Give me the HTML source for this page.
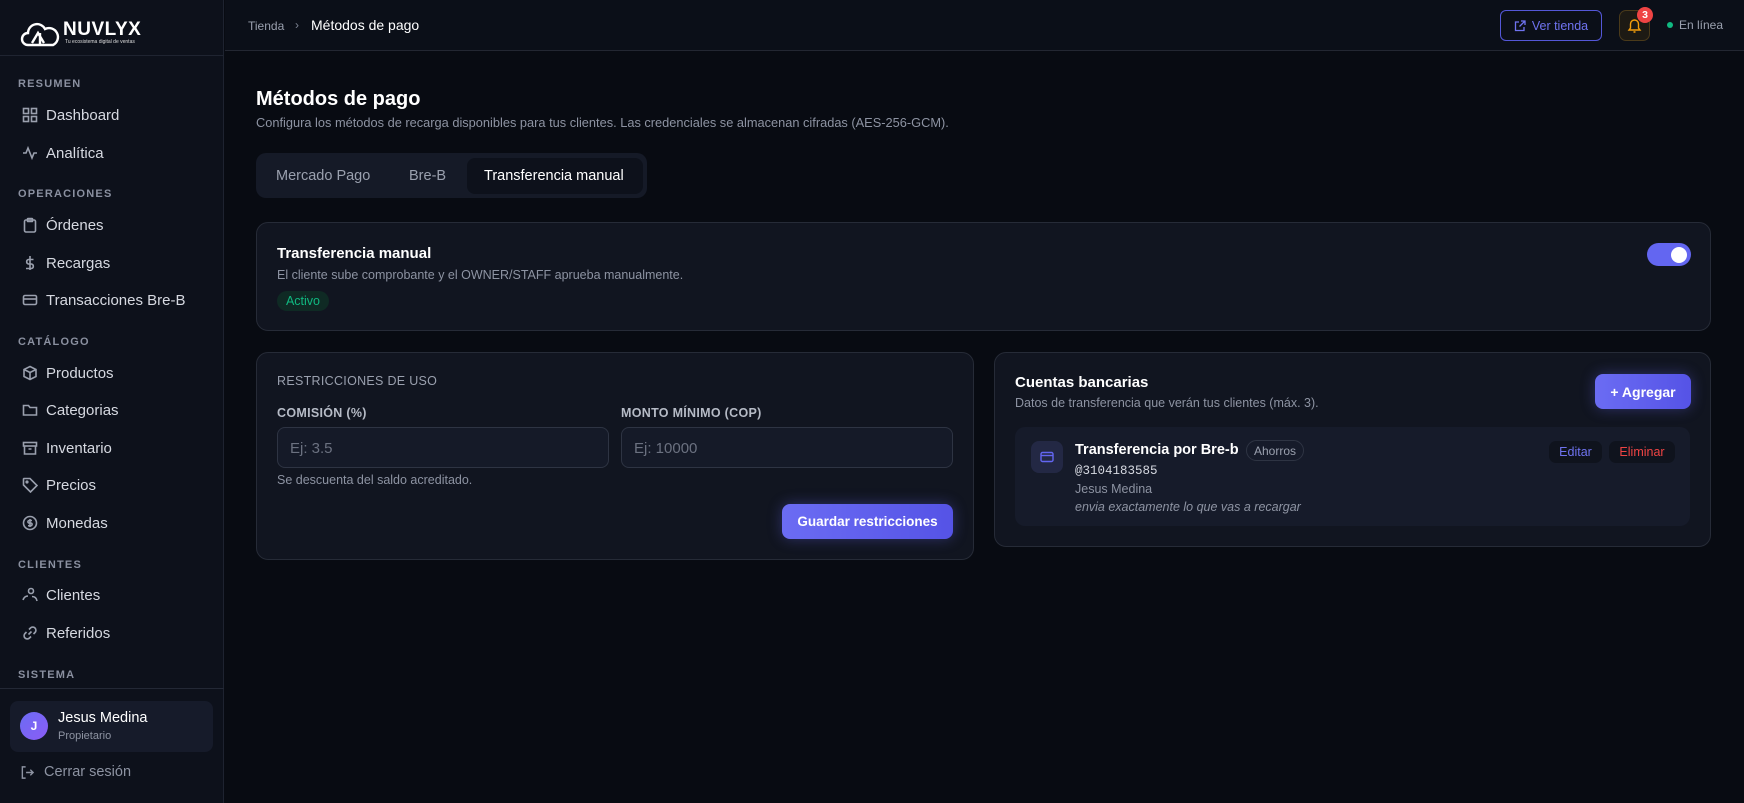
<!DOCTYPE html>
<html><head><meta charset="utf-8"><style>
*{box-sizing:border-box;margin:0;padding:0}
body{width:1744px;height:803px;overflow:hidden;background:#080b12;font-family:"Liberation Sans",sans-serif;color:#e6e8ee;position:relative}
.abs{position:absolute}
.sb{left:0;top:0;width:224px;height:803px;background:#0d111b;border-right:1px solid #1e2330}
.sec{left:18px;font-size:11px;letter-spacing:1.2px;color:#8a90a0;font-weight:bold}
.it{left:22px;font-size:15px;color:#d6d9e1;display:flex;align-items:center;gap:8px;height:20px}
.it svg{width:16px;height:16px;stroke:#9aa0ae;fill:none;stroke-width:1.6}
.card{background:#111520;border:1px solid #262b37;border-radius:12px}
.muted{color:#8d93a2}
.inp{background:#151a28;border:1px solid #2e3443;border-radius:8px;height:41px;font-size:15px;color:#6b7180;padding:12px 12px}
.lbl{font-size:12.5px;font-weight:bold;color:#b6bbc6;letter-spacing:.3px}
.btn{background:linear-gradient(90deg,#6b6cf3,#5553e6);border-radius:8px;color:#fff;font-weight:bold;font-size:13.5px;display:flex;align-items:center;justify-content:center;box-shadow:0 0 14px rgba(99,102,241,.35)}
</style></head><body>
<div class="abs sb"></div>
<div class="abs" style="left:0;top:55px;width:224px;border-top:1px solid #1f2431"></div>
<svg class="abs" style="left:20px;top:20px" width="40" height="28" viewBox="0 0 40 28" fill="none" stroke="#fff" stroke-width="2.4"><path d="M8 25a6 6 0 0 1 0-12a9 9 0 0 1 17-4a7 7 0 0 1 8 16z"/><path d="M12 23l6-10l6 10M20 13v12"/></svg>
<div class="abs" style="left:63px;top:19px;font-size:19px;font-weight:bold;color:#fff;letter-spacing:.5px">NUVLYX</div>
<div class="abs" style="left:65px;top:39px;font-size:5px;color:#ddd">Tu ecosistema digital de ventas</div>

<div class="abs sec" style="top:78px">RESUMEN</div>
<div class="abs it" style="top:105px"><svg viewBox="0 0 16 16"><rect x="1.5" y="1.5" width="5" height="5"/><rect x="9.5" y="1.5" width="5" height="5"/><rect x="1.5" y="9.5" width="5" height="5"/><rect x="9.5" y="9.5" width="5" height="5"/></svg>Dashboard</div>
<div class="abs it" style="top:143px"><svg viewBox="0 0 16 16"><path d="M1 8h3l2-5 4 10 2-5h3"/></svg>Analítica</div>
<div class="abs sec" style="top:188px">OPERACIONES</div>
<div class="abs it" style="top:215px"><svg viewBox="0 0 16 16"><rect x="2.5" y="3" width="11" height="12" rx="1.5"/><rect x="5.5" y="1.5" width="5" height="3" rx=".5"/></svg>Órdenes</div>
<div class="abs it" style="top:253px"><svg viewBox="0 0 16 16"><path d="M8 1v14M11.5 4.5H6.5a2.3 2.3 0 0 0 0 4.5h3a2.3 2.3 0 0 1 0 4.5H4"/></svg>Recargas</div>
<div class="abs it" style="top:290px"><svg viewBox="0 0 16 16"><rect x="1.5" y="3.5" width="13" height="9" rx="1.5"/><path d="M1.5 7h13"/></svg>Transacciones Bre-B</div>
<div class="abs sec" style="top:336px">CATÁLOGO</div>
<div class="abs it" style="top:363px"><svg viewBox="0 0 16 16"><path d="M8 1.5l6 3v7l-6 3-6-3v-7zM2 4.5l6 3 6-3M8 7.5v7"/></svg>Productos</div>
<div class="abs it" style="top:400px"><svg viewBox="0 0 16 16"><path d="M1.5 4v9h13V5.5H8L6.5 3.5h-5z"/></svg>Categorias</div>
<div class="abs it" style="top:438px"><svg viewBox="0 0 16 16"><rect x="1.5" y="2.5" width="13" height="3.5"/><path d="M2.5 6v8h11V6M6.5 9h3"/></svg>Inventario</div>
<div class="abs it" style="top:475px"><svg viewBox="0 0 16 16"><path d="M1.5 2v6l7 7 6.5-6.5-7-7H2z"/><circle cx="5" cy="5" r=".8"/></svg>Precios</div>
<div class="abs it" style="top:513px"><svg viewBox="0 0 16 16"><circle cx="8" cy="8" r="6.5"/><path d="M10 5.5H7.2a1.3 1.3 0 0 0 0 2.6h1.6a1.3 1.3 0 0 1 0 2.6H6M8 4v8"/></svg>Monedas</div>
<div class="abs sec" style="top:559px">CLIENTES</div>
<div class="abs it" style="top:585px"><svg viewBox="0 0 16 16"><circle cx="9" cy="4" r="2.5"/><path d="M1 13c1-3 3-4 5-4M15 14c-.5-3-2.5-4.5-5-4.5"/></svg>Clientes</div>
<div class="abs it" style="top:623px"><svg viewBox="0 0 16 16"><path d="M6.5 9.5l3-3M7 4.5l1.5-1.5a3 3 0 0 1 4.5 4.5L11.5 9M9 11.5L7.5 13A3 3 0 0 1 3 8.5L4.5 7"/></svg>Referidos</div>
<div class="abs sec" style="top:669px">SISTEMA</div>
<div class="abs" style="left:0;top:688px;width:224px;border-top:1px solid #232835"></div>
<div class="abs" style="left:10px;top:701px;width:203px;height:51px;background:#161b2a;border-radius:8px"></div>
<div class="abs" style="left:20px;top:712px;width:28px;height:28px;border-radius:50%;background:linear-gradient(135deg,#6b6cf3,#8b5cf6);color:#fff;font-size:12px;font-weight:bold;display:flex;align-items:center;justify-content:center">J</div>
<div class="abs" style="left:58px;top:710px;font-size:14.5px;color:#fff">Jesus Medina</div>
<div class="abs" style="left:58px;top:730px;font-size:11px;color:#8d93a2">Propietario</div>
<svg class="abs" style="left:20px;top:765px" width="15" height="15" viewBox="0 0 16 16" fill="none" stroke="#8d93a2" stroke-width="1.5"><path d="M6 2H2.5v12H6M6.5 8H14M11 5l3 3-3 3"/></svg>
<div class="abs" style="left:44px;top:764px;font-size:14.5px;color:#8d93a2">Cerrar sesión</div>

<div class="abs" style="left:225px;top:0;width:1519px;height:51px;background:#0b0f18;border-bottom:1px solid #232732"></div>
<div class="abs" style="left:248px;top:19px;font-size:12px;color:#9aa0ae">Tienda</div>
<div class="abs" style="left:295px;top:18px;font-size:12px;color:#7d8392">›</div>
<div class="abs" style="left:311px;top:17px;font-size:14px;color:#fff">Métodos de pago</div>
<div class="abs" style="left:1500px;top:10px;width:102px;height:31px;border:1px solid #5457d8;border-radius:6px;display:flex;align-items:center;justify-content:center;gap:6px;font-size:12.5px;color:#6f73f0"><svg width="12" height="12" viewBox="0 0 12 12" fill="none" stroke="#6f73f0" stroke-width="1.3"><path d="M5 2H1.5v8.5H10V7M7 1h4v4M11 1L5.5 6.5"/></svg>Ver tienda</div>
<div class="abs" style="left:1619px;top:10px;width:31px;height:31px;border:1px solid #4a3a1a;background:#1d1a14;border-radius:7px"></div>
<svg class="abs" style="left:1627px;top:17px" width="15" height="17" viewBox="0 0 15 17" fill="none" stroke="#f59e0b" stroke-width="1.4"><path d="M2 13h11l-1.5-2V7a4 4 0 0 0-8 0v4zM6.5 15h2"/></svg>
<div class="abs" style="left:1637px;top:7px;width:16px;height:16px;border-radius:50%;background:#ef4444;color:#fff;font-size:10.5px;font-weight:bold;display:flex;align-items:center;justify-content:center">3</div>
<div class="abs" style="left:1667px;top:22px;width:6px;height:6px;border-radius:50%;background:#10b981"></div>
<div class="abs" style="left:1679px;top:18px;font-size:12px;color:#9aa0ae">En línea</div>

<div class="abs" style="left:256px;top:88px;font-size:20px;font-weight:bold;color:#fff">Métodos de pago</div>
<div class="abs muted" style="left:256px;top:115px;font-size:12.8px">Configura los métodos de recarga disponibles para tus clientes. Las credenciales se almacenan cifradas (AES-256-GCM).</div>
<div class="abs" style="left:256px;top:153px;width:391px;height:45px;background:#151a27;border-radius:10px"></div>
<div class="abs" style="left:467px;top:158px;width:176px;height:36px;background:#0d111b;border-radius:8px"></div>
<div class="abs muted" style="left:276px;top:168px;font-size:14.5px;color:#9aa0ae">Mercado Pago</div>
<div class="abs" style="left:409px;top:168px;font-size:14.5px;color:#9aa0ae">Bre-B</div>
<div class="abs" style="left:484px;top:168px;font-size:14.5px;color:#fff">Transferencia manual</div>

<div class="abs card" style="left:256px;top:222px;width:1455px;height:109px"></div>
<div class="abs" style="left:277px;top:245px;font-size:15px;font-weight:bold;color:#fff">Transferencia manual</div>
<div class="abs muted" style="left:277px;top:268px;font-size:12.5px">El cliente sube comprobante y el OWNER/STAFF aprueba manualmente.</div>
<div class="abs" style="left:277px;top:291px;width:52px;height:20px;border-radius:10px;background:#0f2a24;color:#10b981;font-size:12.5px;display:flex;align-items:center;justify-content:center">Activo</div>
<div class="abs" style="left:1647px;top:243px;width:44px;height:23px;border-radius:12px;background:#6366f1"></div>
<div class="abs" style="left:1671px;top:247px;width:16px;height:16px;border-radius:50%;background:#fff"></div>

<div class="abs card" style="left:256px;top:352px;width:718px;height:208px"></div>
<div class="abs" style="left:277px;top:374px;font-size:12.5px;color:#9aa0ae;letter-spacing:.3px">RESTRICCIONES DE USO</div>
<div class="abs lbl" style="left:277px;top:406px">COMISIÓN (%)</div>
<div class="abs lbl" style="left:621px;top:406px">MONTO MÍNIMO (COP)</div>
<div class="abs inp" style="left:277px;top:427px;width:332px">Ej: 3.5</div>
<div class="abs inp" style="left:621px;top:427px;width:332px">Ej: 10000</div>
<div class="abs muted" style="left:277px;top:473px;font-size:12.5px">Se descuenta del saldo acreditado.</div>
<div class="abs btn" style="left:782px;top:504px;width:171px;height:35px">Guardar restricciones</div>

<div class="abs card" style="left:994px;top:352px;width:717px;height:195px"></div>
<div class="abs" style="left:1015px;top:374px;font-size:15px;font-weight:bold;color:#fff">Cuentas bancarias</div>
<div class="abs muted" style="left:1015px;top:396px;font-size:12.5px">Datos de transferencia que verán tus clientes (máx. 3).</div>
<div class="abs btn" style="left:1595px;top:374px;width:96px;height:35px;font-size:14px">+ Agregar</div>
<div class="abs" style="left:1015px;top:427px;width:675px;height:99px;background:#161b2a;border-radius:10px"></div>
<div class="abs" style="left:1031px;top:441px;width:32px;height:32px;background:#232844;border-radius:8px"></div>
<svg class="abs" style="left:1040px;top:451px" width="14" height="12" viewBox="0 0 14 12" fill="none" stroke="#6366f1" stroke-width="1.4"><rect x="1" y="1.5" width="12" height="9" rx="1.5"/><path d="M1 4.5h12"/></svg>
<div class="abs" style="left:1075px;top:442px;font-size:14.5px;font-weight:bold;color:#fff">Transferencia por Bre-b</div>
<div class="abs" style="left:1246px;top:440px;width:58px;height:21px;border:1px solid #2e3443;border-radius:11px;font-size:12px;color:#9aa0ae;display:flex;align-items:center;justify-content:center">Ahorros</div>
<div class="abs" style="left:1075px;top:464px;font-size:12.5px;font-family:'Liberation Mono',monospace;color:#d6d9e1">@3104183585</div>
<div class="abs muted" style="left:1075px;top:482px;font-size:12.5px">Jesus Medina</div>
<div class="abs muted" style="left:1075px;top:500px;font-size:12.5px;font-style:italic">envia exactamente lo que vas a recargar</div>
<div class="abs" style="left:1549px;top:441px;width:53px;height:22px;background:#0f131d;border-radius:7px;color:#6f73f0;font-size:12.5px;display:flex;align-items:center;justify-content:center">Editar</div>
<div class="abs" style="left:1609px;top:441px;width:66px;height:22px;background:#0f131d;border-radius:7px;color:#ef4444;font-size:12.5px;display:flex;align-items:center;justify-content:center">Eliminar</div>
</body></html>
